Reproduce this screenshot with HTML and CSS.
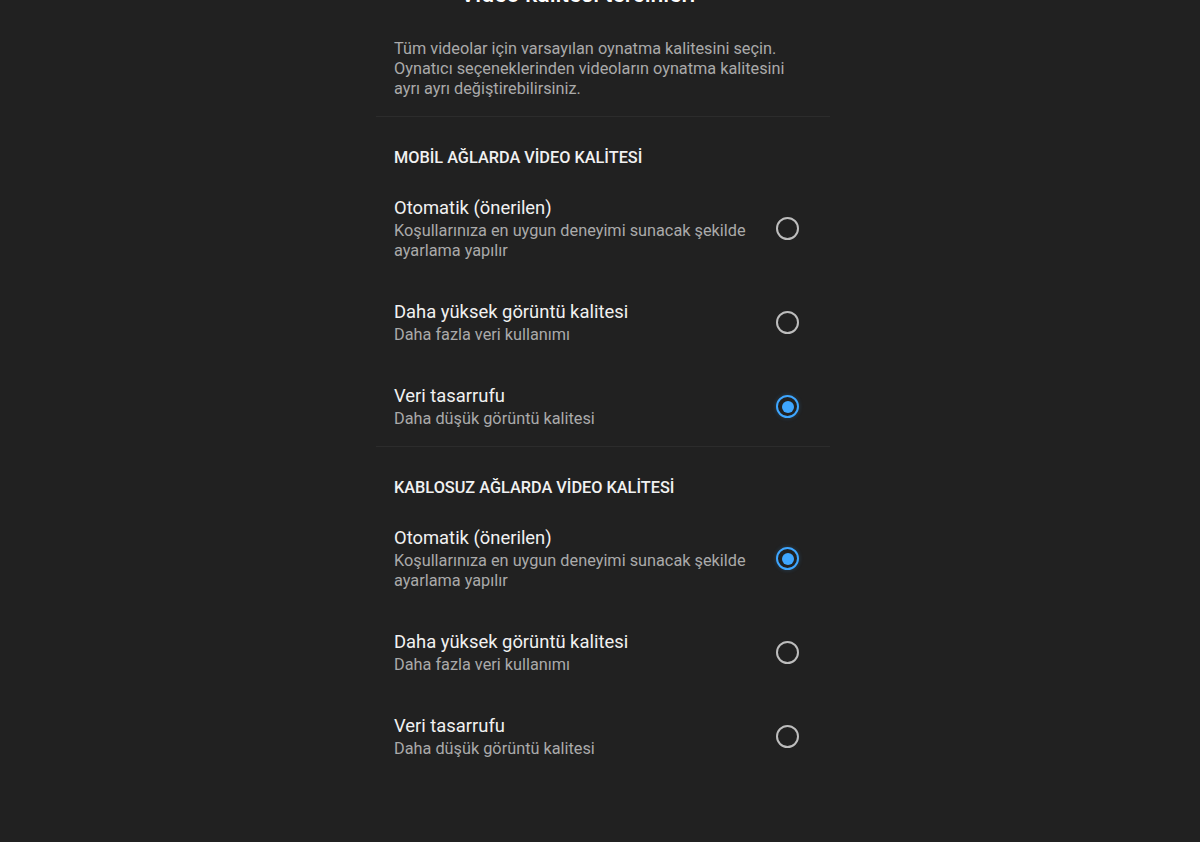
FILE: index.html
```html
<!DOCTYPE html>
<html lang="tr">
<head>
  <meta charset="UTF-8" />
  <meta name="viewport" content="width=device-width, initial-scale=1.0"/>
  <title>Video kalitesi tercihleri</title>
  <link rel="stylesheet" href="styles.css">
</head>
<body>

  <div class="panel">
    <div class="page-title">Video kalitesi tercihleri</div>

    <div class="intro">
      Tüm videolar için varsayılan oynatma kalitesini seçin. Oynatıcı seçeneklerinden videoların oynatma kalitesini ayrı ayrı değiştirebilirsiniz.
    </div>

    <div class="section">
      <div class="section-title">MOBİL AĞLARDA VİDEO KALİTESİ</div>

      <label class="option">
        <div class="option-text">
          <div class="option-name">Otomatik (önerilen)</div>
          <div class="option-desc">Koşullarınıza en uygun deneyimi sunacak şekilde ayarlama yapılır</div>
        </div>
        <span class="radio"></span>
      </label>

      <label class="option">
        <div class="option-text">
          <div class="option-name">Daha yüksek görüntü kalitesi</div>
          <div class="option-desc">Daha fazla veri kullanımı</div>
        </div>
        <span class="radio"></span>
      </label>

      <label class="option">
        <div class="option-text">
          <div class="option-name">Veri tasarrufu</div>
          <div class="option-desc">Daha düşük görüntü kalitesi</div>
        </div>
        <span class="radio checked"></span>
      </label>
    </div>

    <div class="section">
      <div class="section-title">KABLOSUZ AĞLARDA VİDEO KALİTESİ</div>

      <label class="option">
        <div class="option-text">
          <div class="option-name">Otomatik (önerilen)</div>
          <div class="option-desc">Koşullarınıza en uygun deneyimi sunacak şekilde ayarlama yapılır</div>
        </div>
        <span class="radio checked"></span>
      </label>

      <label class="option">
        <div class="option-text">
          <div class="option-name">Daha yüksek görüntü kalitesi</div>
          <div class="option-desc">Daha fazla veri kullanımı</div>
        </div>
        <span class="radio"></span>
      </label>

      <label class="option">
        <div class="option-text">
          <div class="option-name">Veri tasarrufu</div>
          <div class="option-desc">Daha düşük görüntü kalitesi</div>
        </div>
        <span class="radio"></span>
      </label>
    </div>
  </div>

</body>
</html>
```

FILE: styles.css
```css
* {
  box-sizing: border-box;
}
html, body {
  height: 100%;
}
body {
  margin: 0;
  padding-left: 6px;
  background-color: #212121;
  font-family: Roboto, 'Noto Sans', sans-serif;
  color: #f1f1f1;
  overflow: hidden;
}
.panel {
  width: 454px;
  margin: 0 auto;
}
.page-title {
  margin-top: -17px;
  margin-right: 50px;
  font-size: 23px;
  line-height: 24px;
  font-weight: 500;
  text-align: center;
  color: #fff;
}
.intro {
  margin-top: 32px;
  padding: 0 18px 17px;
  font-size: 16.3px;
  line-height: 20px;
  color: #aaaaaa;
  border-bottom: 1px solid #2c2c2c;
}
.section + .section {
  border-top: 1px solid #2c2c2c;
}
.section-title {
  padding: 31px 18px 8px;
  font-size: 16.3px;
  line-height: 20px;
  font-weight: 500;
  color: #f1f1f1;
}
.option {
  display: flex;
  align-items: center;
  padding: 20px 31px 19px 18px;
  cursor: pointer;
}
.option:last-child {
  padding-bottom: 17px;
}
.option-text {
  flex: 1;
}
.option-name {
  font-size: 18.4px;
  line-height: 24px;
  color: #f1f1f1;
}
.option-desc {
  margin-top: 1px;
  font-size: 16.3px;
  line-height: 20px;
  color: #aaaaaa;
}
.radio {
  flex: none;
  width: 23px;
  height: 23px;
  margin-left: 18px;
  border: 2px solid #bdbdbd;
  border-radius: 50%;
  display: flex;
  align-items: center;
  justify-content: center;
}
.radio.checked {
  border-color: #3ea6ff;
  box-shadow: 0 0 4px rgba(62, 166, 255, 0.25);
}
.radio.checked::after {
  content: "";
  width: 12px;
  height: 12px;
  border-radius: 50%;
  background: #3ea6ff;
}
```
